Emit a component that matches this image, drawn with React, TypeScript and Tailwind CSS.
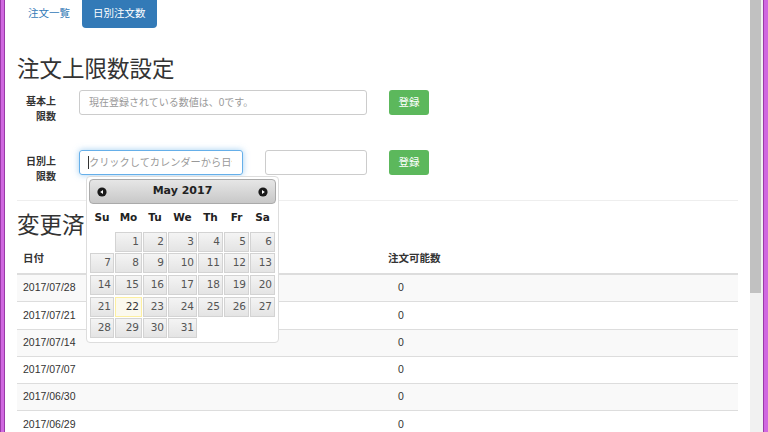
import React from 'react';

const dates = ['2017/07/28', '2017/07/21', '2017/07/14', '2017/07/07', '2017/06/30', '2017/06/29'];
const dayNames = ['Su', 'Mo', 'Tu', 'We', 'Th', 'Fr', 'Sa'];

const CircleArrow = ({ dir }: { dir: 'w' | 'e' }) => (
  <svg width="10" height="10" viewBox="0 0 10 10">
    <circle cx="5" cy="5" r="4.6" fill="#1a1a1a" />
    {dir === 'w' ? (
      <polygon points="3.2,5 6,2.9 6,7.1" fill="#fff" />
    ) : (
      <polygon points="6.8,5 4,2.9 4,7.1" fill="#fff" />
    )}
  </svg>
);

const Datepicker = () => {
  const cells = Array.from({ length: 32 }, (_, i) => i);
  return (
    <div className="absolute left-[7px] top-[26px] z-10 w-[193px] rounded-[4px] border border-[#dddddd] bg-white p-[2px] pb-[4px] font-['DejaVu_Sans',sans-serif]">
      {/* header */}
      <div className="flex h-[25px] items-center justify-between rounded-[4px] border border-[#aaaaaa] bg-[linear-gradient(#e6e6e6,#c8c8c8)] px-[7px]">
        <CircleArrow dir="w" />
        <span className="text-[11px] font-bold text-[#222222]">May 2017</span>
        <CircleArrow dir="e" />
      </div>
      <div className="ml-[1px] grid grid-cols-[24px_27px_24px_29px_25px_25px_25px] gap-x-[1px]">
        {dayNames.map((d) => (
          <div key={d} className="flex h-[27.7px] items-center justify-center text-[10.5px] font-bold text-[#222222]">
            {d}
          </div>
        ))}
      </div>
      <div className="ml-[1px] grid grid-cols-[24px_27px_24px_29px_25px_25px_25px] gap-x-[1px] gap-y-[1.65px]">
        {cells.map((d) =>
          d === 0 ? (
            <div key={d} className="h-[20px]" />
          ) : (
            <div
              key={d}
              className={
                d === 22
                  ? 'flex h-[20px] items-center justify-end border border-[#fcefa1] bg-[#fbf9ee] pr-[2px] text-[10.5px] text-[#363636]'
                  : 'flex h-[20px] items-center justify-end border border-[#d3d3d3] bg-[linear-gradient(#f4f4f4,#e4e4e4)] pr-[2px] text-[10.5px] text-[#555555]'
              }
            >
              {d}
            </div>
          )
        )}
      </div>
    </div>
  );
};

const App = () => {
  return (
    <div className="flex h-[432px] w-[768px] overflow-hidden bg-white font-['Liberation_Sans','Noto_Sans_CJK_JP',sans-serif] text-[#333333]">
      {/* left window edge */}
      <div className="w-[5px] border-x border-[#9a3aa8] bg-[#d068e0]" />

      <div className="w-[745px] px-[12px]">
        {/* tabs */}
        <div className="flex h-[28px] gap-[1px] text-[10.5px]">
          <div className="flex items-center px-[11px] text-[#337ab7]">注文一覧</div>
          <div className="flex items-center rounded-b-[4px] bg-[#337ab7] px-[11px] text-white">日別注文数</div>
        </div>

        <h2 className="mt-[30px] h-[24px] text-[22.5px] leading-[24px]">注文上限数設定</h2>

        {/* 基本上限数 */}
        <div className="mt-[8px] flex h-[25px] items-start">
          <label className="w-[39px] pt-[5px] text-right text-[10px] font-bold leading-[14.5px]">
            基本上
            <br />
            限数
          </label>
          <div className="ml-[23px] flex h-[25px] w-[288px] items-center rounded-[3px] border border-[#cccccc] px-[9px] text-[10px] text-[#999999]">
            現在登録されている数値は、0です。
          </div>
          <button className="ml-[22px] h-[25px] w-[40px] rounded-[3px] bg-[#5cb85c] text-[10.5px] text-white">登録</button>
        </div>

        {/* 日別上限数 */}
        <div className="mt-[35px] flex h-[25px] items-start">
          <label className="w-[39px] pt-[5px] text-right text-[10px] font-bold leading-[14.5px]">
            日別上
            <br />
            限数
          </label>
          <div className="relative ml-[23px]">
            <div className="flex h-[25px] w-[164px] items-center overflow-hidden whitespace-nowrap rounded-[3px] border border-[#66afe9] pl-[8px] text-[10.2px] text-[#999999] shadow-[0_0_6px_rgba(102,175,233,0.6)]">
              <span className="h-[13px] w-[1px] shrink-0 bg-[#333333]" />
              <span className="w-[142.5px] shrink-0 overflow-hidden">クリックしてカレンダーから日付を選択</span>
            </div>
            <Datepicker />
          </div>
          <div className="ml-[22px] h-[25px] w-[102px] rounded-[3px] border border-[#cccccc]" />
          <button className="ml-[22px] h-[25px] w-[40px] rounded-[3px] bg-[#5cb85c] text-[10.5px] text-white">登録</button>
        </div>

        <hr className="mt-[25px] border-t border-[#eeeeee]" />

        <h2 className="mt-[13px] h-[24px] text-[22.5px] leading-[24px]">変更済の上限数</h2>

        {/* table */}
        <div className="mt-[7px] text-[10.5px]">
          <div className="flex h-[29.5px] items-center border-b-2 border-[#dddddd] font-bold">
            <div className="w-[365px] px-[6px]">日付</div>
            <div className="px-[6px]">注文可能数</div>
          </div>
          {dates.map((d, i) => (
            <div
              key={d}
              className={
                (i === 0 ? 'h-[26.8px] ' : 'h-[27.3px] border-t border-[#dddddd] ') +
                (i % 2 === 0 ? 'flex items-center bg-[#f9f9f9]' : 'flex items-center bg-white')
              }
            >
              <div className="w-[365px] px-[6px]">{d}</div>
              <div className="pl-[16px]">0</div>
            </div>
          ))}
        </div>
      </div>

      {/* scrollbar */}
      <div className="w-[13px] bg-[#f1f1f1]">
        <div className="h-[293px] w-[11px] bg-[#c1c1c1]" />
      </div>
      {/* right window edge */}
      <div className="w-[5px] border-l border-[#9a3aa8] bg-[#d068e0]" />
    </div>
  );
};

export default App;
